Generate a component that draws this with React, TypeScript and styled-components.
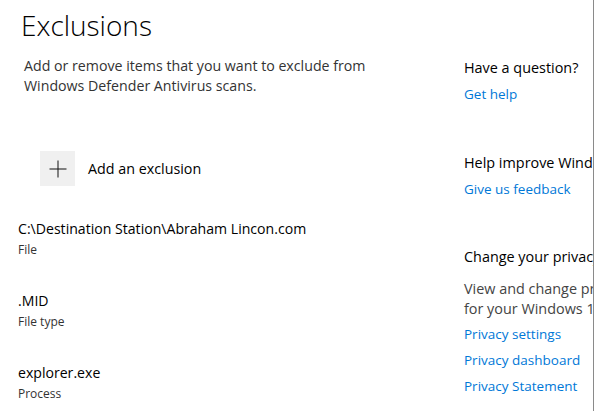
import React from "react";
import styled, { createGlobalStyle } from "styled-components";

const Global = createGlobalStyle`
  html, body { margin: 0; padding: 0; background: #ffffff; }
  body { font-family: "Open Sans", "Noto Sans", sans-serif; color: #000; }
`;

const Page = styled.div`
  width: 593px;
  height: 411px;
  border-right: 1px solid #8a8a8a;
  overflow: hidden;
  display: flex;
  flex-direction: row;
  background: #fff;
`;

const Main = styled.div`
  width: 446px;
  flex: none;
  display: flex;
  flex-direction: column;
  padding-left: 18px;
  box-sizing: border-box;
`;

const Title = styled.h1`
  margin: 6px 0 0 3px;
  font-weight: 300;
  font-size: 28px;
  line-height: 38px;
  color: #000;
`;

const Description = styled.p`
  margin: 12px 0 0 6px;
  font-size: 14.2px;
  line-height: 20px;
  color: #333;
  width: 390px;
`;

const AddRow = styled.div`
  display: flex;
  align-items: center;
  gap: 13px;
  margin: 55px 0 0 22px;
`;

const PlusBox = styled.div`
  width: 35px;
  height: 35px;
  background: #f0f0f0;
  display: flex;
  align-items: center;
  justify-content: center;
`;

const AddLabel = styled.span`
  font-size: 14.3px;
  color: #000;
`;

const ItemList = styled.div`
  display: flex;
  flex-direction: column;
  gap: 32px;
  margin-top: 33px;
`;

const Item = styled.div`
  display: flex;
  flex-direction: column;
`;

const ItemName = styled.div`
  font-size: 14.1px;
  line-height: 20px;
  color: #000;
`;

const ItemKind = styled.div`
  font-size: 12px;
  line-height: 18px;
  margin-top: 2px;
  color: #333;
`;

const Side = styled.div`
  flex: none;
  width: 240px;
  padding-left: 18px;
  padding-top: 57px;
  box-sizing: border-box;
  display: flex;
  flex-direction: column;
`;

const Section = styled.div<{ $gap?: number }>`
  display: flex;
  flex-direction: column;
  margin-bottom: ${(p) => p.$gap ?? 0}px;
`;

const SideHeading = styled.div`
  font-size: 14.4px;
  line-height: 22px;
  color: #000;
  white-space: nowrap;
`;

const SideText = styled.div`
  font-size: 14.4px;
  line-height: 20px;
  color: #444;
  width: 232px;
  margin-top: 11px;
`;

const SideLink = styled.a`
  font-size: 13.5px;
  line-height: 26px;
  color: #0078d7;
  text-decoration: none;
  white-space: nowrap;
  margin-top: 2px;
  & + & {
    margin-top: 0;
  }
`;

const PlusIcon = () => (
  <svg width="18" height="18" viewBox="0 0 18 18">
    <path d="M9 0.5V17.5M0.5 9H17.5" stroke="#111" strokeWidth="1" fill="none" />
  </svg>
);

const items = [
  { name: "C:\\Destination Station\\Abraham Lincon.com", kind: "File" },
  { name: ".MID", kind: "File type" },
  { name: "explorer.exe", kind: "Process" },
];

export default function App() {
  return (
    <>
      <Global />
      <Page>
        <Main>
          <Title>Exclusions</Title>
          <Description>
            Add or remove items that you want to exclude from Windows Defender Antivirus scans.
          </Description>
          <AddRow>
            <PlusBox>
              <PlusIcon />
            </PlusBox>
            <AddLabel>Add an exclusion</AddLabel>
          </AddRow>
          <ItemList>
            {items.map((it) => (
              <Item key={it.name}>
                <ItemName>{it.name}</ItemName>
                <ItemKind>{it.kind}</ItemKind>
              </Item>
            ))}
          </ItemList>
        </Main>
        <Side>
          <Section $gap={45}>
            <SideHeading>Have a question?</SideHeading>
            <SideLink href="#">Get help</SideLink>
          </Section>
          <Section $gap={44}>
            <SideHeading>Help improve Windows Defender</SideHeading>
            <SideLink href="#">Give us feedback</SideLink>
          </Section>
          <Section>
            <SideHeading>Change your privacy settings</SideHeading>
            <SideText>View and change privacy settings for your Windows 10 device.</SideText>
            <SideLink href="#">Privacy settings</SideLink>
            <SideLink href="#">Privacy dashboard</SideLink>
            <SideLink href="#">Privacy Statement</SideLink>
          </Section>
        </Side>
      </Page>
    </>
  );
}
